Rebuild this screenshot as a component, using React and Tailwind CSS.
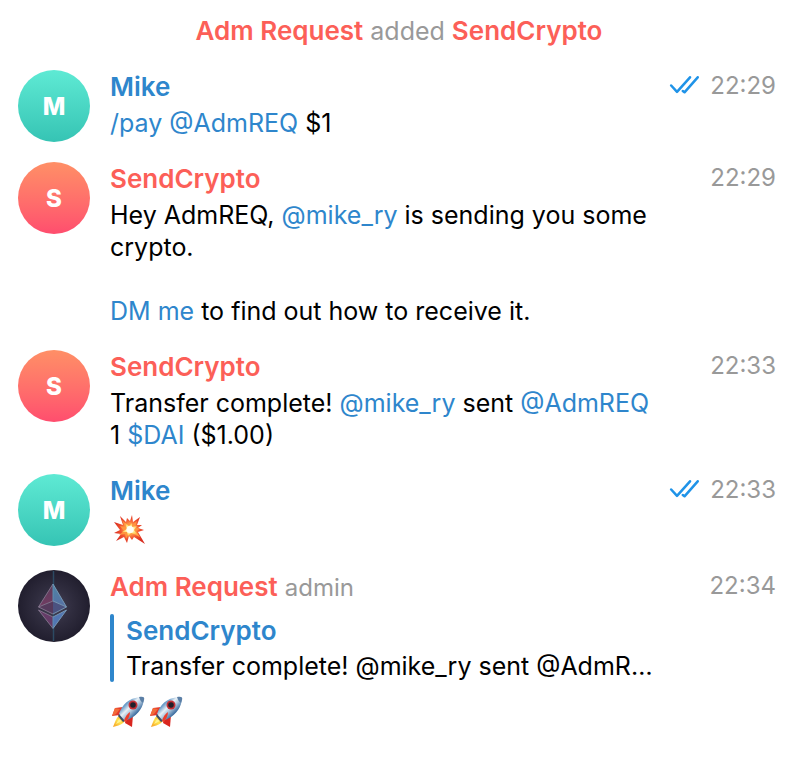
const avatarColors = {
  teal: 'from-[#5eead4] to-[#35c4b4]',
  red: 'from-[#ff8f66] to-[#ff4d6e]',
}

function LetterAvatar({ letter, color }) {
  return (
    <div className={`flex size-[72px] shrink-0 items-center justify-center rounded-full bg-linear-to-b pt-px text-2xl font-extrabold text-white ${avatarColors[color]}`}>
      {letter}
    </div>
  )
}

function EthAvatar() {
  return (
    <svg viewBox="0 0 72 72" className="size-[72px] shrink-0" role="img" aria-label="Adm Request">
      <defs>
        <radialGradient id="ethBg">
          <stop offset="0" stopColor="#454056" />
          <stop offset="0.5" stopColor="#302d3f" />
          <stop offset="1" stopColor="#211e2e" />
        </radialGradient>
        <linearGradient id="ethLeft" x1="0" y1="0" x2="0" y2="1">
          <stop offset="0" stopColor="#5d3c5c" />
          <stop offset="1" stopColor="#713b61" />
        </linearGradient>
        <linearGradient id="ethRight" x1="0" y1="0" x2="0" y2="1">
          <stop offset="0" stopColor="#4d84a4" />
          <stop offset="1" stopColor="#5770a5" />
        </linearGradient>
      </defs>
      <circle cx="36" cy="36" r="36" fill="url(#ethBg)" />
      <path d="M35.500 1V71" stroke="#2c4a63" strokeWidth="1.500" />
      <path d="M35 14L20.500 37L35 31Z" fill="url(#ethLeft)" />
      <path d="M35 14L48.500 37L35 31Z" fill="url(#ethRight)" />
      <path d="M20.500 37L35 31V44Z" fill="#553a5c" />
      <path d="M48.500 37L35 31V44Z" fill="#4b5280" />
      <path d="M20.500 40L35 47V58.500Z" fill="#653b67" />
      <path d="M48.500 40L35 47V58.500Z" fill="#5276b2" />
      <g fill="none" strokeWidth="0.900" strokeLinejoin="round">
        <path d="M35 14L20.500 37L35 44M20.500 37L35 31M20.500 40L35 58.500M20.500 40L35 47" stroke="#85768f" />
        <path d="M35 14L48.500 37L35 44M48.500 37L35 31M48.500 40L35 58.500M48.500 40L35 47" stroke="#7b9cb8" />
        <path d="M35 14V31M35 47V58" stroke="#5f93b4" />
      </g>
    </svg>
  )
}

function ReadTicks() {
  return (
    <svg viewBox="0 0 30 20" className="h-5 w-[30px]" fill="none" stroke="#1f93e8" strokeWidth="2.500" strokeLinecap="round" strokeLinejoin="round" role="img" aria-label="Read">
      <path d="M2.200 9.500L8 15.800L21 1.300" />
      <path d="M13.800 15L15.500 16.300L28.700 1.300" />
    </svg>
  )
}

function Explosion() {
  return (
    <svg viewBox="0 0 36 32" className="h-8 w-9" role="img" aria-label="💥">
      <defs>
        <radialGradient id="boom" gradientUnits="userSpaceOnUse" cx="20" cy="16" r="16">
          <stop offset="0.300" stopColor="#ff9b4d" />
          <stop offset="0.600" stopColor="#f0522f" />
          <stop offset="1" stopColor="#d82d20" />
        </radialGradient>
        <radialGradient id="boomCore">
          <stop offset="0.300" stopColor="#fffef0" />
          <stop offset="0.650" stopColor="#ffe680" />
          <stop offset="1" stopColor="#ffb54d" />
        </radialGradient>
      </defs>
      <path d="M10 3L16 9L17 5L20 8L22 2L23 9L30 4L27 12L32 12L28 15L34 17L28 19L35 31L24 24L22 27L19 23L17 30L14 24L6 28L11 21L4 20L10 17L4 9L13 12Z" fill="url(#boom)" />
      <path d="M12 7L17 12L20 9L22 12L27 8L25 14L30 16L26 18L30 24L23 21L20 23L18 22L16 26L15 21L9 22L14 18L10 13L15 14Z" fill="#ff963f" />
      <path d="M15 10L19 13L22 10L22 14L27 13L24 17L28 22L21 20L18 23L17 19L12 19L17 16Z" fill="url(#boomCore)" />
      <circle cx="20" cy="16.500" r="3.500" fill="#fffef5" />
    </svg>
  )
}

function Rocket() {
  return (
    <svg viewBox="0 0 36 36" className="size-9" role="img" aria-label="🚀">
      <defs>
        <linearGradient id="rocketBody" gradientUnits="userSpaceOnUse" x1="13" y1="9" x2="25" y2="21">
          <stop offset="0" stopColor="#4279b0" />
          <stop offset="0.200" stopColor="#76a5ce" />
          <stop offset="0.450" stopColor="#e9f0f5" />
          <stop offset="0.650" stopColor="#b5cbdf" />
          <stop offset="1" stopColor="#3d6da0" />
        </linearGradient>
        <linearGradient id="rocketFlame" x1="1" y1="0" x2="0" y2="1">
          <stop offset="0" stopColor="#ef8d1d" />
          <stop offset="0.500" stopColor="#ffe34d" />
          <stop offset="1" stopColor="#f59b25" />
        </linearGradient>
      </defs>
      <path d="M13 13L5 14L2 22L10 21Z" fill="#e5382a" />
      <path d="M5 14L2 22L6 20L10 15Z" fill="#f26a38" />
      <path d="M23 21L22 33L15 29L16 25Z" fill="#d9261f" />
      <path d="M9 22C6 24 5 28 3 33C8 32 13 30 15 27Z" fill="url(#rocketFlame)" />
      <path d="M9 25L6 30L12 27" fill="#fff38f" />
      <path d="M9 20C12 11 18 4 31 3C35 3 34 6 33 10C30 19 23 24 15 27Z" fill="url(#rocketBody)" />
      <path d="M29 3C33 2 35 3 34 6L33 9C31 8 30 6 29 3Z" fill="#5b7fa6" />
      <path d="M9 20L15 27L13 28L8 22Z" fill="#3a4e68" />
      <circle cx="23" cy="11" r="4.500" fill="#c42f34" />
      <circle cx="23" cy="11" r="2.800" fill="#20202b" />
      <path d="M20 18C17 20 15 23 14 27L16 28C18 25 20 22 20 18Z" fill="#ed3d2a" />
    </svg>
  )
}

function Link({ children }) {
  return <a href="#" className="text-[#2e86cc]">{children}</a>
}

function Message({ avatar, name, nameColor, role, time, read, children }) {
  return (
    <article className="flex gap-5">
      {avatar}
      <div className="min-w-0 flex-1 pb-[3px]">
        <header className="flex h-9 items-center">
          <h2 className={`pb-[3px] text-[26px] font-semibold ${nameColor}`}>{name}</h2>
          {role && <span className="ml-[7px] text-2xl text-[#999999]">{role}</span>}
          <span className="ml-auto flex items-center gap-[11px] pb-1 text-2xl text-[#999999]">
            {read && <ReadTicks />}
            <time>{time}</time>
          </span>
        </header>
        <div className="mt-px mr-[112px] leading-8">{children}</div>
      </div>
    </article>
  )
}

export default function App() {
  return (
    <main className="min-h-screen bg-white pr-7 pb-8 pl-[18px] font-['Inter','Liberation_Sans',sans-serif] text-[25px] text-black">
      <p className="pt-[15px] pb-[23px] pl-1 text-center leading-8 text-[#999999]">
        <span className="text-[26px] font-semibold text-[#fc5f58]">Adm Request</span> added{' '}
        <span className="text-[26px] font-semibold text-[#fc5f58]">SendCrypto</span>
      </p>

      <div className="flex flex-col gap-5">
        <Message avatar={<LetterAvatar letter="M" color="teal" />} name="Mike" nameColor="text-[#2e86cc]" time="22:29" read>
          <p><Link>/pay</Link> <Link>@AdmREQ</Link> $1</p>
        </Message>

        <Message avatar={<LetterAvatar letter="S" color="red" />} name="SendCrypto" nameColor="text-[#fc5f58]" time="22:29">
          <p>Hey AdmREQ, <Link>@mike_ry</Link> is sending you some crypto.</p>
          <p className="mt-8"><Link>DM me</Link> to find out how to receive it.</p>
        </Message>

        <Message avatar={<LetterAvatar letter="S" color="red" />} name="SendCrypto" nameColor="text-[#fc5f58]" time="22:33">
          <p>Transfer complete! <Link>@mike_ry</Link> sent <Link>@AdmREQ</Link> 1 <Link>$DAI</Link> ($1.00)</p>
        </Message>

        <Message avatar={<LetterAvatar letter="M" color="teal" />} name="Mike" nameColor="text-[#2e86cc]" time="22:33" read>
          <div className="flex h-9 items-center"><Explosion /></div>
        </Message>

        <Message avatar={<EthAvatar />} name="Adm Request" nameColor="text-[#fc5f58]" role="admin" time="22:34">
          <div className="mt-2 flex gap-3">
            <div className="w-1 shrink-0 rounded-full bg-[#2e86cc]" />
            <blockquote className="min-w-0">
              <h3 className="pt-px pb-[3px] text-[26px] leading-8 font-semibold text-[#2e86cc]">SendCrypto</h3>
              <p className="truncate">Transfer complete! @mike_ry sent @AdmREQ 1 $DAI ($1.00)</p>
            </blockquote>
          </div>
          <div className="mt-3 flex gap-[2px]">
            <Rocket />
            <Rocket />
          </div>
        </Message>
      </div>
    </main>
  )
}
